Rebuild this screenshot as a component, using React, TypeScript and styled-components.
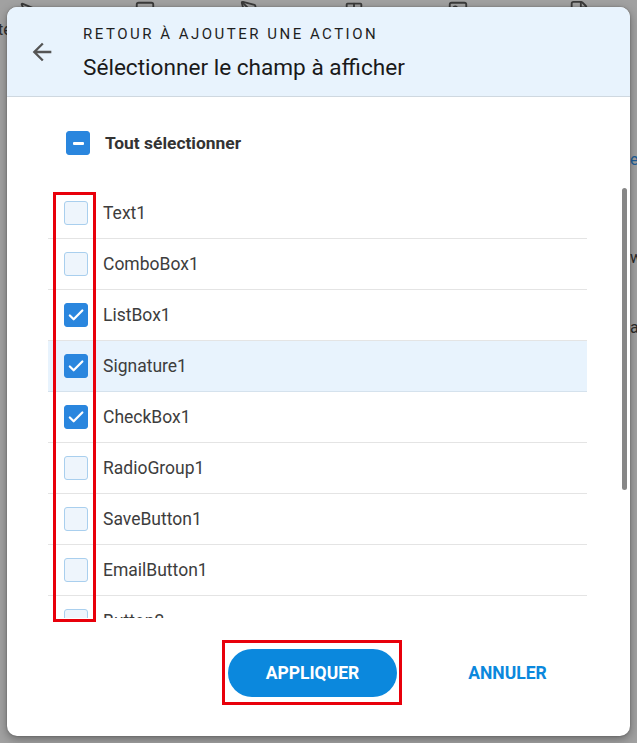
import * as React from 'react';
import styled, { createGlobalStyle } from 'styled-components';
import { MousePointer2, Square, PenTool, Type, Image, File } from 'lucide-react';

const GlobalStyle = createGlobalStyle`
  html, body { margin: 0; padding: 0; }
  body { font-family: Roboto, "Liberation Sans", Arial, sans-serif; }
  * { box-sizing: border-box; }
`;

const Screen = styled.div`
  position: relative;
  width: 637px;
  height: 743px;
  overflow: hidden;
  background: #a1a1a1;
`;

/* dimmed app behind the modal, only its edges show */
const Backdrop = styled.div`
  display: flex;
  flex-direction: column;
  color: #2c2c2c;
  font-size: 16px;
`;

const ToolStrip = styled.div`
  display: grid;
  grid-template-columns: 116px 106px 103px 104px 121px auto;
  align-items: end;
  height: 8px;
  overflow: hidden;
  padding-left: 18px;
  color: #3a3a3a;
`;

const EdgeLine = styled.div<{ $gap: number; $blue?: boolean }>`
  display: flex;
  justify-content: space-between;
  margin-top: ${p => p.$gap}px;
  height: 18px;
  line-height: 18px;
  white-space: nowrap;
  color: ${p => (p.$blue ? '#1d5f99' : '#2c2c2c')};
`;

const EdgeText = styled.span`
  width: 7px;
  overflow: visible;
`;

const LeftEdge = styled(EdgeText)`
  margin-left: -2px;
`;

const Dialog = styled.div`
  position: absolute;
  inset: 7px;
  display: flex;
  flex-direction: column;
  background: #fff;
  border-radius: 10px;
  overflow: hidden;
  box-shadow: 0 3px 10px rgba(0, 0, 0, 0.35), 0 0 2px rgba(0, 0, 0, 0.3);
`;

const Header = styled.header`
  flex: none;
  height: 90px;
  display: flex;
  align-items: center;
  gap: 27px;
  padding-left: 21px;
  background: #e8f3fd;
  border-bottom: 1px solid #cfd8e0;
`;

const BackButton = styled.button`
  display: flex;
  width: 28px;
  height: 28px;
  padding: 0;
  border: 0;
  background: none;
  color: #555;
  cursor: pointer;
`;

const Heading = styled.div`
  display: flex;
  flex-direction: column;
  gap: 10px;
  padding-top: 2px;
`;

const Overline = styled.div`
  font-size: 15px;
  line-height: 20px;
  letter-spacing: 2.5px;
  text-transform: uppercase;
  color: #1f1f1f;
`;

const Title = styled.h1`
  margin: 0;
  font-size: 22.6px;
  line-height: 28px;
  font-weight: 400;
  color: #1a1a1a;
`;

const SelectAllRow = styled.label`
  flex: none;
  display: flex;
  align-items: center;
  gap: 15px;
  height: 24px;
  margin: 34px 0 33px 59px;
  font-size: 17.4px;
  font-weight: 700;
  color: #333;
`;

const ListArea = styled.div`
  position: relative;
  flex: 1;
  min-height: 0;
  display: flex;
  margin-left: 41px;
`;

const List = styled.div`
  flex: 1;
  overflow: hidden;
  padding-right: 43px;
`;

/* scroll thumb, sits over the right edge of the list */
const ScrollThumb = styled.div<{ $size: number }>`
  position: absolute;
  top: 0;
  right: 3px;
  width: 5px;
  height: ${p => p.$size}px;
  border-radius: 3px;
  background: #878787;
`;

const Row = styled.div<{ $active?: boolean }>`
  display: flex;
  align-items: center;
  gap: 15px;
  height: 51px;
  padding-left: 16px;
  border-bottom: 1px solid ${p => (p.$active ? '#d5e2ed' : '#e4e4e4')};
  background: ${p => (p.$active ? '#e8f3fd' : '#fff')};
  font-size: 17.5px;
  color: #3d3d3d;
`;

const Box = styled.span<{ $on?: boolean }>`
  flex: none;
  display: flex;
  align-items: center;
  justify-content: center;
  width: 24px;
  height: 24px;
  border-radius: 3px;
  background: ${p => (p.$on ? '#2a86de' : '#eef5fc')};
  border: 1.5px solid ${p => (p.$on ? '#2a86de' : '#a9cfee')};
`;

const Dash = styled.span`
  width: 11px;
  height: 3px;
  border-radius: 1px;
  background: #fff;
`;

/* red annotation drawn over the checkbox column */
const Marker = styled.div`
  position: absolute;
  left: 5px;
  top: 4px;
  width: 43px;
  height: 430px;
  border: 3px solid #e8000b;
  pointer-events: none;
`;

const Footer = styled.footer`
  flex: none;
  display: flex;
  justify-content: flex-end;
  align-items: center;
  gap: 21px;
  padding: 22px 38px 31px;
`;

const Highlight = styled.span`
  display: inline-flex;
  border: 3px solid #e8000b;
  padding: 6px 2px 5px 3px;
`;

const ActionButton = styled.button<{ $primary?: boolean }>`
  width: 169px;
  height: 48px;
  border: 0;
  border-radius: 24px;
  background: ${p => (p.$primary ? '#0b88dd' : 'transparent')};
  color: ${p => (p.$primary ? '#fff' : '#0b88dd')};
  font-family: Roboto, "Liberation Sans", Arial, sans-serif;
  font-size: 17.5px;
  font-weight: 700;
  text-transform: uppercase;
  cursor: pointer;
`;

const Check = () => (
  <svg width="20" height="20" viewBox="0 0 24 24" fill="none">
    <path d="M4.6 12.6l4.6 4.5L19.6 6.6" stroke="#fff" strokeWidth="2.7" strokeLinecap="round" strokeLinejoin="round" />
  </svg>
);

const ArrowBack = () => (
  <svg width="28" height="28" viewBox="0 0 24 24" fill="currentColor">
    <path d="M20 11H7.83l5.59-5.59L12 4l-8 8 8 8 1.41-1.41L7.83 13H20v-2z" />
  </svg>
);

const fields = [
  { name: 'Text1', on: false },
  { name: 'ComboBox1', on: false },
  { name: 'ListBox1', on: true },
  { name: 'Signature1', on: true, hover: true },
  { name: 'CheckBox1', on: true },
  { name: 'RadioGroup1', on: false },
  { name: 'SaveButton1', on: false },
  { name: 'EmailButton1', on: false },
  { name: 'Button2', on: false },
  { name: 'Button3', on: false },
  { name: 'Image1', on: false },
  { name: 'Label1', on: false },
];

const VISIBLE = 430;
const ROW_H = 51;

const App: React.FC = () => {
  const thumb = Math.round((VISIBLE * VISIBLE) / (fields.length * ROW_H));
  return (
    <Screen>
      <GlobalStyle />
      <Backdrop>
        <ToolStrip>
          <MousePointer2 size={22} />
          <Square size={22} />
          <PenTool size={22} />
          <Type size={22} />
          <Image size={22} />
          <File size={22} />
        </ToolStrip>
        <EdgeLine $gap={13}>
          <LeftEdge>te</LeftEdge>
          <EdgeText />
        </EdgeLine>
        <EdgeLine $gap={112} $blue>
          <EdgeText />
          <EdgeText>e</EdgeText>
        </EdgeLine>
        <EdgeLine $gap={80}>
          <EdgeText />
          <EdgeText>w</EdgeText>
        </EdgeLine>
        <EdgeLine $gap={52}>
          <EdgeText />
          <EdgeText>a</EdgeText>
        </EdgeLine>
      </Backdrop>

      <Dialog>
        <Header>
          <BackButton aria-label="Retour">
            <ArrowBack />
          </BackButton>
          <Heading>
            <Overline>Retour à ajouter une action</Overline>
            <Title>Sélectionner le champ à afficher</Title>
          </Heading>
        </Header>

        <SelectAllRow>
          <Box $on>
            <Dash />
          </Box>
          Tout sélectionner
        </SelectAllRow>

        <ListArea>
          <List>
            {fields.map(f => (
              <Row key={f.name} $active={f.hover}>
                <Box $on={f.on}>{f.on && <Check />}</Box>
                {f.name}
              </Row>
            ))}
          </List>
          <ScrollThumb $size={thumb} />
          <Marker />
        </ListArea>

        <Footer>
          <Highlight>
            <ActionButton $primary>Appliquer</ActionButton>
          </Highlight>
          <ActionButton>Annuler</ActionButton>
        </Footer>
      </Dialog>
    </Screen>
  );
};

export default App;
